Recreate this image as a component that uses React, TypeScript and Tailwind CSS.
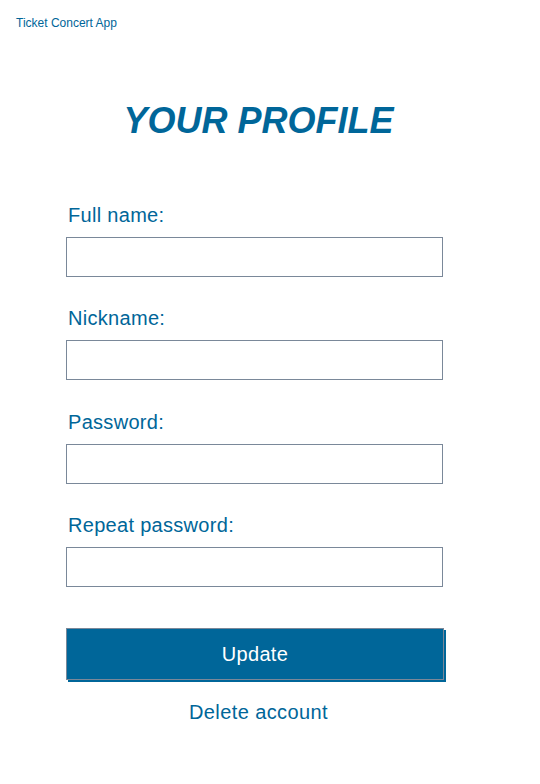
export default function App() {
  const fields = ["Full name:", "Nickname:", "Password:", "Repeat password:"];
  const gaps = ["mt-0", "mt-[30px]", "mt-[31px]", "mt-[30px]"];

  return (
    <div className="min-h-[784px] bg-white font-['Liberation_Sans',Arial,sans-serif] text-[#006699]">
      <p className="pl-4 pt-[16px] text-[12px] leading-[14px]">Ticket Concert App</p>

      <div className="ml-[66px] w-[380px]">
        <h1 className="mt-[71px] pl-[5px] text-center text-[36px] font-bold italic leading-[40px]">
          YOUR PROFILE
        </h1>

        <form className="mt-[63px] flex flex-col">
          {fields.map((label, i) => (
            <div key={i} className={"flex flex-col " + gaps[i]}>
              <label className="pl-[2px] text-[20px] leading-[23px] tracking-[0.3px]">{label}</label>
              <input
                type={i > 1 ? "password" : "text"}
                className="mt-[10px] h-[40px] w-[377px] border border-[#7a8899] bg-white px-2 text-[16px] outline-none"
              />
            </div>
          ))}
        </form>

        <button
          type="button"
          className="mt-[41px] h-[52px] w-[378px] border border-[#7a8899] bg-[#006699] text-[20px] tracking-[0.3px] text-white shadow-[2px_2px_0_#006699]"
        >
          Update
        </button>

        <p className="mt-[21px] pl-[5px] text-center text-[20px] leading-[23px] tracking-[0.4px]">
          Delete account
        </p>
      </div>
    </div>
  );
}
